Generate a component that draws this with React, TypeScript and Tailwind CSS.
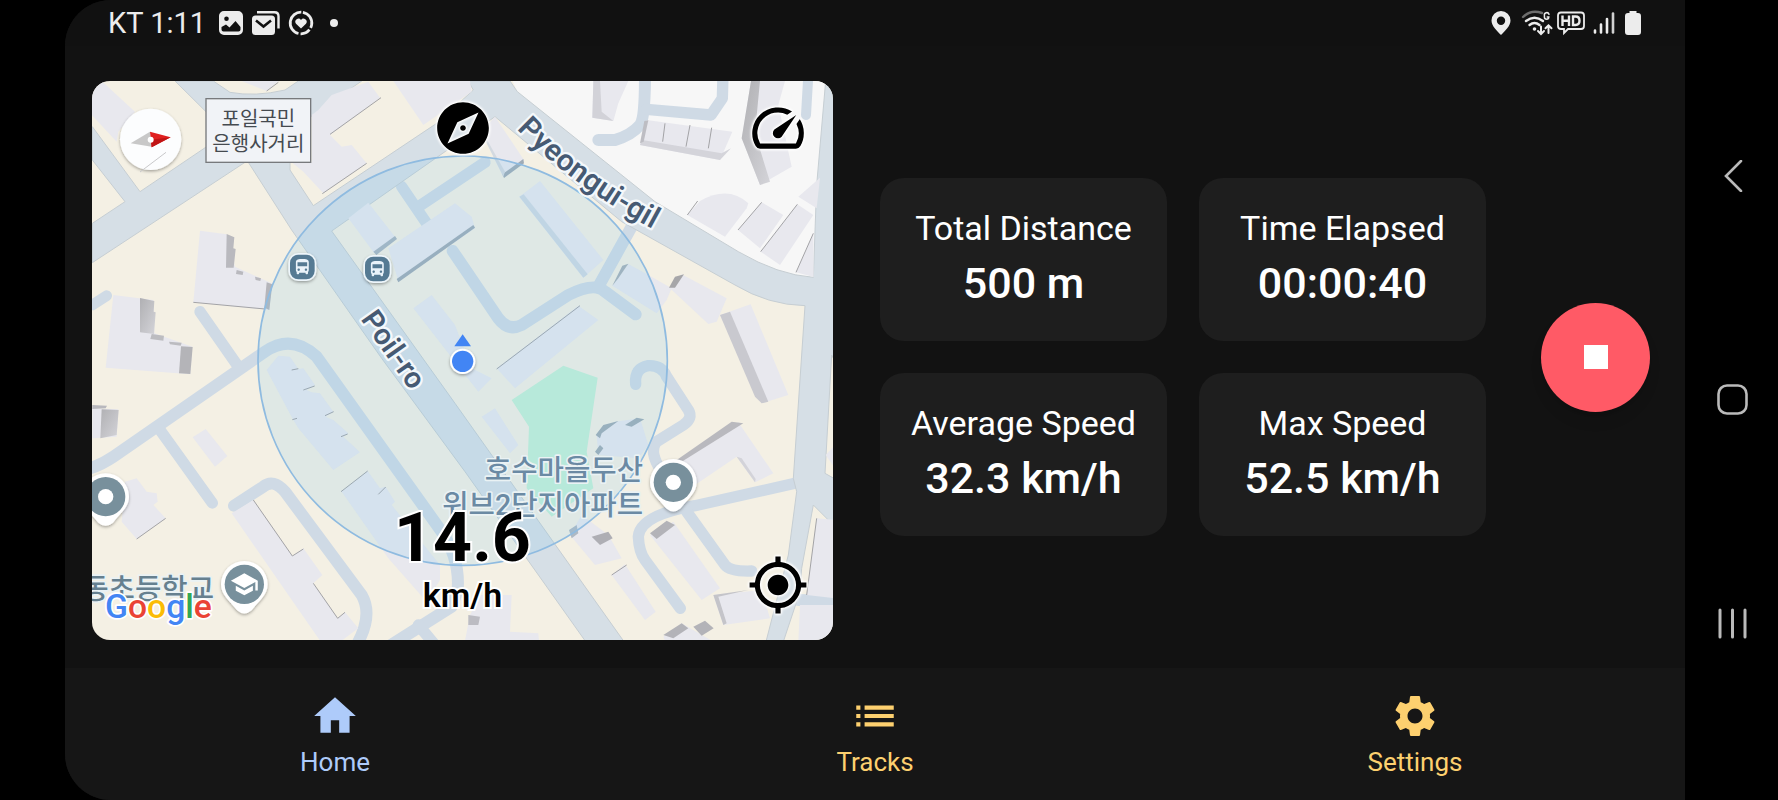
import type { ReactNode } from "react";
import {
  MdDirectionsBus,
  MdExplore,
  MdHome,
  MdList,
  MdMyLocation,
  MdSchool,
  MdSettings,
  MdSpeed,
} from "react-icons/md";

const ROAD = "#d6dfe6";
const LANE = "#cfdae5";
const EDGE = "#c6ced3";
const BUILDING = "#e8e8ee";
const PARK = "1435,872 1538,908 1505,1130 1525,1240 1400,1325 1325,1240 1332,1055 1280,975";

const lanes: [string, number][] = [
  ["M22 690 L65 662", 32],
  ["M345 710 L460 875", 34],
  ["M0 1185 Q45 1172 85 1145 L540 830 Q620 775 695 845 L1070 1370 Q1125 1450 1118 1545 L1100 1595 L910 1715", 36],
  ["M225 1065 L382 1284", 34],
  ["M447 1292 L535 1235 Q565 1210 600 1250 L830 1560 Q865 1620 815 1710", 36],
  ["M1000 1650 L1050 1710", 34],
  ["M950 335 L1025 445", 34],
  ["M1000 395 L1200 262", 34],
  ["M1103 528 L1240 730 Q1270 770 1310 750 L1450 660 Q1530 620 1560 650 L1652 718", 36],
  ["M1540 635 L1640 455", 36],
  ["M1540 195 H1590 Q1640 180 1665 150 Q1680 130 1680 0", 36],
  ["M1685 103 L1878 120 L1912 70 L1914 0", 34],
  ["M2163 120 L2170 0", 30],
  ["M1652 928 Q1648 880 1690 872 Q1730 870 1745 905 L1810 1005 Q1825 1030 1795 1050 L1715 1100 Q1690 1130 1730 1190", 34],
  ["M2130 1225 L1830 1292 Q1665 1320 1660 1385 Q1662 1430 1680 1455 L1786 1600", 34],
  ["M1805 1310 L1920 1470 Q1935 1490 2000 1488", 34],
  ["M2140 1575 L2250 1578", 36],
];

const mainRoads =
  "M22 155 L165 350 L365 215 L365 112 L270 18 H385 L435 52 Q510 66 600 45 L640 18 H830 L670 130 L615 262 L615 285 L685 392 L1055 145 L1110 95 L1165 45 L1150 18 H1275 L1297 50 L1710 380 L1960 530 Q2080 600 2185 607 L2195 330 L2222 18 H2250 V860 L2240 840 L2220 1195 L2250 1212 V1355 L2185 1290 L2150 1480 L2145 1550 L2095 1700 H2043 L2110 1440 L2135 1250 L2125 1210 L2150 840 L2160 692 Q2050 690 1950 630 L1610 440 L1230 125 L740 468 L1110 985 L1615 1697 H1500 L1140 1190 L890 850 L620 465 L490 262 L480 262 L22 563 V445 L120 380 L22 255 Z";

const buildings = [
  "22,18 50,18 150,110 100,170 95,200 20,120",
  "680,120 700,105 740,60 850,20 885,68 735,180 770,215 800,210 845,265 715,355 655,290 620,262 680,262",
  "470,18 580,18 545,48",
  "925,18 1155,18 1160,50 1015,150",
  "345,467 425,478 450,575 560,625 553,705 325,682",
  "85,660 205,675 208,775 322,815 316,898 62,878",
  "22,1000 100,1003 95,1085 22,1090",
  "323,1087 362,1062 427,1143 390,1175",
  "120,1220 155,1210 185,1250 215,1255 218,1280 205,1290 242,1330 155,1392 110,1340",
  "440,1315 505,1275 622,1443 655,1420 712,1500 685,1525 758,1630 780,1612 820,1660 770,1697 705,1697",
  "545,885 580,842 615,845 640,882 655,880 690,930 665,945 680,952 705,955 745,1010 722,1025 745,1035 790,1075 775,1085 825,1132 745,1185 640,1060 622,1030",
  "770,1250 848,1188 885,1240 902,1235 930,1280 920,1290 1065,1470 1065,1515 1025,1580 910,1450",
  "790,430 850,383 930,485 868,535",
  "910,520 1110,385 1160,425 1170,460 940,618",
  "985,700 1040,660 1110,750 1160,880 1220,910 1180,950",
  "1190,1025 1230,1000 1300,1110 1275,1135",
  "1188,170 1230,125 1317,255 1255,305",
  "1303,365 1365,318 1555,555 1495,608",
  "1235,880 1480,692 1540,735 1290,940",
  "1582,632 1630,567 1690,600 1760,640 1745,675 1715,715",
  "1755,640 1790,598 1925,670 1895,740 1870,747",
  "1905,720 1997,688 2110,960 2030,985",
  "1525,18 1630,18 1600,85 1585,138 1522,128",
  "1665,210 1685,135 1942,170 1905,255",
  "1970,190 1998,18 2100,18 2080,90 2120,275 2025,330",
  "1959,465 2030,382 2095,420 2025,520",
  "2027,530 2137,388 2185,420 2085,570",
  "2140,365 2205,308 2195,400",
  "2133,592 2185,475 2186,606",
  "1535,1080 1590,1040 1665,1030 1690,1110 1660,1150 1540,1140",
  "1770,1160 1960,1042 2065,1195 2010,1222 1955,1145 1830,1230",
  "1695,1380 1765,1340 1905,1540 1850,1575",
  "1455,1380 1490,1320 1570,1380 1610,1450 1530,1470",
  "1580,1500 1620,1468 1712,1610 1680,1635",
  "1885,1560 2030,1545 2055,1630 1915,1650",
  "1735,1685 1790,1645 1880,1697 1740,1697",
  "2195,1330 2250,1335 2250,1570 2165,1560",
  "2145,1590 2250,1590 2250,1697 2140,1697",
  "1140,1697 1155,1620 1185,1560 1280,1560 1275,1670 1360,1675 1362,1697",
  "2222,1140 2250,1110 2250,1180",
];

const shades: [string, string][] = [
  ["425,477 448,487 445,520 452,522 446,578 423,578", "#b9b9be"],
  ["455,585 475,590 473,600 453,597", "#b9b9be"],
  ["510,605 528,610 526,618 512,615", "#b9b9be"],
  ["545,622 562,628 553,705 538,698", "#b5b5ba"],
  ["165,669 208,678 206,710 212,712 207,777 165,772", "url(#wall)"],
  ["200,777 237,782 235,797 196,792", "#bcbcc0"],
  ["252,800 290,803 287,812 255,808", "#bcbcc0"],
  ["288,814 323,816 316,897 282,895", "#b4b4b8"],
  ["50,1003 101,1005 95,1080 46,1090", "url(#wall)"],
  ["22,990 66,992 62,1000 22,1002", "#b8b8bd"],
  ["865,530 930,483 936,492 874,540", "#a9b5c0"],
  ["935,612 1165,450 1170,458 940,622", "#9fabb6"],
  ["1252,298 1315,252 1317,265 1257,309", "#9fabb6"],
  ["1303,365 1316,358 1508,598 1495,608", "#cfd9e3"],
  ["1582,632 1612,572 1630,566 1600,610", "#a7b0b8"],
  ["1752,638 1770,605 1797,598 1770,638", "#a6a6a9"],
  ["1905,720 1935,710 2050,980 2030,985 2010,965", "#c9c9cf"],
  ["1532,1080 1555,1050 1600,1038 1550,1075 1545,1090", "#9facb5"],
  ["1530,1130 1545,1110 1555,1120 1540,1140", "#9facb5"],
  ["1620,1050 1655,1028 1678,1033 1640,1055", "#9facb5"],
  ["1775,1155 1940,1040 1975,1045 1790,1160", "#b9b9be"],
  ["1955,1145 1970,1150 2012,1212 2010,1222", "#d3d3d9"],
  ["1695,1375 1745,1337 1770,1350 1715,1392", "#b3b3b8"],
  ["1520,1385 1570,1370 1583,1390 1545,1410", "#aeaeb4"],
  ["1452,1365 1475,1350 1480,1375 1460,1390", "#aeb9c4"],
  ["1885,1560 1990,1545 1900,1565 1925,1645 1915,1650", "#c4c4c9"],
  ["1735,1680 1790,1645 1810,1660 1765,1690", "#b3b3b8"],
  ["1825,1655 1860,1637 1886,1660 1850,1682", "#b3b3b8"],
  ["1150,1620 1185,1625 1180,1650 1150,1650", "#bcbcc2"],
  ["1970,190 1998,18 2025,18 2010,175 2055,320 2025,330", "url(#wall)"],
  ["1525,18 1545,18 1550,110 1585,138 1522,128", "#d2d2d8"],
  ["1665,210 1672,195 1910,235 1938,220 1905,255", "#d4d4da"],
  ["1665,205 1678,138 1690,136 1676,200", "#bdbdc3"],
  ["1188,170 1195,175 1260,290 1255,305", "#d3d9e0"],
];

const hairlines = [
  "M735 178 L888 68 M712 356 L845 265 M545 48 L580 22",
  "M505 1275 L622 1443 L655 1422 M685 1525 L758 1630 L780 1612",
  "M768 1250 L848 1188 M155 1392 L242 1330",
  "M1235 882 L1485 692",
  "M1740 145 L1733 200 M1815 150 L1803 215 M1880 158 L1870 220",
  "M1807 420 L1838 378 M1959 465 L2030 382 M2027 530 L2137 388 M2133 592 L2185 475",
  "M1580 1500 L1625 1470 M2195 1330 L2165 1560 M325 682 L540 702",
  "M620 885 l20 -4 M655 945 l34 -12 M720 1022 l26 -12 M768 1085 l20 -8 M880 1258 l22 -22 M622 1034 l14 -4",
];

function Pin({ x, y, children }: { x: number; y: number; children?: ReactNode }) {
  return (
    <g transform={`translate(${x} ${y})`}>
      <path
        d="M-70 0 A70 70 0 1 1 70 0 C70 32 45 48 22 78 Q0 97 -22 78 C-45 48 -70 32 -70 0Z"
        fill="#fff"
        filter="url(#soft)"
      />
      <circle r="59" fill="#78909c" />
      {children ?? <circle r="23" fill="#fff" />}
    </g>
  );
}

function BusStop({ x, y }: { x: number; y: number }) {
  return (
    <g transform={`translate(${x} ${y})`}>
      <rect x="-42" y="-42" width="84" height="84" rx="30" fill="#eef6fb" filter="url(#soft)" />
      <rect x="-37" y="-37" width="74" height="74" rx="25" fill="#557a93" />
      <MdDirectionsBus x="-29" y="-29" width="58" height="58" size={58} color="#eaf3fa" />
    </g>
  );
}

function MapCanvas() {
  return (
    <svg
      viewBox="21 18 2223 1677"
      preserveAspectRatio="xMidYMid slice"
      className="block h-full w-full font-['Roboto','Noto_Sans_CJK_KR',sans-serif]"
      role="img"
      aria-label="Map"
    >
      <defs>
        <linearGradient id="wall" x1="0" x2="1" y1="0" y2="1">
          <stop offset="0" stopColor="#b0b0b3" />
          <stop offset="1" stopColor="#d4d4d9" />
        </linearGradient>
        <filter id="soft" x="-30%" y="-30%" width="160%" height="160%">
          <feDropShadow dx="0" dy="4" stdDeviation="5" floodOpacity="0.35" />
        </filter>
        <path id="pyeongui" d="M1295 162 Q1470 345 1760 492" />
      </defs>
      <rect x="0" y="0" width="2260" height="1720" fill="#f4f0e4" />
      <path d="M1275 0 L1297 50 L1710 380 L1960 530 Q2080 600 2185 607 L2200 330 L2222 0Z" fill="#f7f7f7" />
      {lanes.map(([d, w]) => (
        <path key={d} d={d} fill="none" stroke={LANE} strokeWidth={w} strokeLinecap="round" strokeLinejoin="round" />
      ))}
      <path d={mainRoads} fill={ROAD} stroke={EDGE} strokeWidth="3" />
      {buildings.map((p) => (
        <polygon key={p} points={p} fill={BUILDING} />
      ))}
      <path d="M1807 420 L1845 378 Q1930 330 1990 385 L1985 400 L1920 485Z" fill={BUILDING} />
      {shades.map(([p, fill]) => (
        <polygon key={p} points={p} fill={fill} />
      ))}
      {hairlines.map((d) => (
        <path key={d} d={d} fill="none" stroke="#a3a3a6" strokeWidth="3" />
      ))}

      <circle cx="1133" cy="857" r="614" fill="#78c2f0" fillOpacity="0.17" stroke="#8fbbe0" strokeWidth="5" />
      <polygon points={PARK} fill="#b7e9da" />

      <g fill="#465a73" stroke="#f4f8fb" strokeWidth="14" strokeLinejoin="round" paintOrder="stroke" fontWeight="600">
        <text fontSize="90">
          <textPath href="#pyeongui">Pyeongui-gil</textPath>
        </text>
        <text fontSize="88" transform="translate(826 732) rotate(55)">
          Poil-ro
        </text>
      </g>
      <g
        fill="#6b8aa4"
        stroke="#eaf2f4"
        strokeWidth="10"
        strokeLinejoin="round"
        paintOrder="stroke"
        textAnchor="end"
        fontSize="86"
        fontWeight="500"
      >
        <text x="1674" y="1216">호수마을두산</text>
        <text x="1674" y="1320">위브2단지아파트</text>
        <text x="387" y="1572" fill="#66808f">동초등학교</text>
      </g>

      <rect x="363" y="71" width="314" height="191" fill="#f1f3f7" stroke="#77797c" strokeWidth="4" />
      <g fill="#454a50" textAnchor="middle" fontSize="60">
        <text x="520" y="154">포일국민</text>
        <text x="520" y="229">은행사거리</text>
      </g>

      <BusStop x={652} y={576} />
      <BusStop x={877} y={582} />
      <Pin x={62} y={1265} />
      <Pin x={1765} y={1222} />
      <Pin x={478} y={1528}>
        <MdSchool x="-44" y="-44" width="88" height="88" size={88} color="#fff" />
      </Pin>

      <path d="M1133 778 L1158 814 H1108Z" fill="#4285f4" />
      <circle cx="1133" cy="859" r="38" fill="#fff" filter="url(#soft)" />
      <circle cx="1133" cy="859" r="32" fill="#4285f4" />

      <circle cx="197" cy="193" r="92" fill="#fcfdfe" filter="url(#soft)" />
      <path d="M165 291 L243 232" stroke="#c9c9cb" strokeWidth="3" />
      <path d="M137 205 L195 170 L200 215Z" fill="#c8c8c8" />
      <path d="M195 170 L257 187 L200 217Z" fill="#e02020" />
      <path d="M200 217 L257 187 L197 194Z" fill="#c01414" />
      <circle cx="197" cy="194" r="9" fill="#fff" />

      <text
        x="60"
        y="1628"
        fontSize="101"
        fontWeight="500"
        stroke="#fff"
        strokeWidth="10"
        strokeLinejoin="round"
        paintOrder="stroke"
      >
        <tspan fill="#4285f4">G</tspan>
        <tspan fill="#ea4335">o</tspan>
        <tspan fill="#fbbc05">o</tspan>
        <tspan fill="#4285f4">g</tspan>
        <tspan fill="#34a853">l</tspan>
        <tspan fill="#ea4335">e</tspan>
      </text>
    </svg>
  );
}

const mapButton =
  "absolute text-black [filter:drop-shadow(0_0_1px_#fff)_drop-shadow(0_0_1px_#fff)_drop-shadow(0_0_1px_#fff)]";

function MapPanel() {
  return (
    <section className="relative h-full overflow-hidden rounded-[18px]">
      <div className="absolute inset-0">
        <MapCanvas />
      </div>
      <button type="button" aria-label="Compass" className={`${mapButton} top-4 left-1/2 -translate-x-1/2`}>
        <MdExplore size={62} />
      </button>
      <button type="button" aria-label="Speedometer" className={`${mapButton} top-4 right-6`}>
        <MdSpeed size={62} />
      </button>
      <button type="button" aria-label="My location" className={`${mapButton} right-6 bottom-6`}>
        <MdMyLocation size={62} />
      </button>
      <div className="absolute inset-x-0 bottom-6 flex flex-col items-center font-bold text-black [-webkit-text-stroke:4px_white] [paint-order:stroke_fill]">
        <span className="text-[68px] leading-[72px]">14.6</span>
        <span className="text-[34px] leading-[42px] font-semibold">km/h</span>
      </div>
    </section>
  );
}

function StatusBar() {
  return (
    <header className="flex h-[46px] items-center justify-between bg-[#111] pr-11 pl-[43px] text-[#ececec]">
      <div className="flex items-center">
        <span className="text-[29px] leading-8">KT 1:11</span>
        <svg className="ml-3 h-[26px] w-[26px]" viewBox="0 0 26 26" fill="#ececec" aria-hidden="true">
          <path
            fillRule="evenodd"
            d="M6 1h14a5 5 0 0 1 5 5v14a5 5 0 0 1-5 5H6a5 5 0 0 1-5-5V6a5 5 0 0 1 5-5Zm2.500 5.500a2.300 2.300 0 1 0 0 4.600 2.300 2.300 0 0 0 0-4.600ZM3.500 17v2.500a2 2 0 0 0 2 2h15a2 2 0 0 0 2-2V17l-5-6-6 6.500L8 14.500Z"
          />
        </svg>
        <svg className="ml-2 h-[26px] w-[28px]" viewBox="0 0 28 26" fill="none" aria-hidden="true">
          <path d="M5 2.200h17.500q4 0 4 4V18.500" stroke="#ececec" strokeWidth="2.400" />
          <rect x="0" y="5.500" width="23" height="19.500" rx="3.500" fill="#ececec" />
          <path d="M4 10.500l7.500 6 7.500-6" stroke="#111" strokeWidth="2.600" />
        </svg>
        <svg className="ml-2 h-[26px] w-[26px]" viewBox="0 0 26 26" fill="none" aria-hidden="true">
          <circle
            cx="13"
            cy="13"
            r="10.800"
            stroke="#ececec"
            strokeWidth="2.800"
            strokeDasharray="20 2.200 10 2.200 31.400 2.100"
            transform="rotate(-80 13 13)"
          />
          <path d="M13 18.500l-5-4.800a3.100 3.100 0 0 1 5-3.700 3.100 3.100 0 0 1 5 3.700Z" fill="#ececec" />
        </svg>
        <span className="ml-4 h-2 w-2 rounded-full bg-[#ececec]" />
      </div>
      <div className="flex items-center">
        <svg className="h-[26px] w-5" viewBox="0 0 20 26" fill="#ececec" aria-hidden="true">
          <path
            fillRule="evenodd"
            d="M10 1a9.500 9.500 0 0 1 9.500 9.500C19.500 16 14 21 10 25 6 21 .5 16 .5 10.500A9.500 9.500 0 0 1 10 1Zm0 5.500a4.200 4.200 0 1 0 0 8.400 4.200 4.200 0 0 0 0-8.400Z"
          />
        </svg>
        <svg className="ml-2.5 h-[26px] w-8" viewBox="0 0 32 26" fill="none" strokeWidth="2.400" strokeLinecap="round" aria-hidden="true">
          <path d="M2 7Q10 -1 21 3" stroke="#6d6d6d" />
          <path d="M5 11q8.500-6.500 17 0M8.500 15q5-4 10 0" stroke="#ececec" />
          <circle cx="13.500" cy="19" r="1.800" fill="#ececec" />
          <path d="M28 4.200a2.400 2.400 0 0 0-4.600 1.300v1.500a2.200 2.200 0 0 0 4.400 0h-1.600" stroke="#ececec" strokeWidth="1.500" />
          <path d="M20 16.500v7m-3-2.500l3 3 3-3M27.500 23v-7.500m-3 2.800l3-3 3 3" stroke="#ececec" strokeWidth="2" />
        </svg>
        <svg className="ml-1 h-[26px] w-7" viewBox="0 0 28 26" fill="none" stroke="#ececec" aria-hidden="true">
          <path d="M4 2.500h20q3 0 3 3V16q0 3-3 3H11l-4 4v-4H4q-3 0-3-3V5.500q0-3 3-3Z" strokeWidth="1.800" />
          <path d="M5.500 5.500v10.500M12 5.500v10.500M5.500 10.800H12M16 6.500v8.500h2.500q4 0 4-4.250t-4-4.250Z" strokeWidth="2.400" />
        </svg>
        <svg className="ml-2 h-[26px] w-[22px]" viewBox="0 0 22 26" stroke="#ececec" strokeWidth="2.600" strokeLinecap="round" aria-hidden="true">
          <path d="M2 20.500v2M8 14.500v8M14 9v13.500" />
          <path d="M20 3.500v19" stroke="#d0d0d0" />
        </svg>
        <svg className="ml-2.5 h-[26px] w-4" viewBox="0 0 16 26" fill="#ececec" aria-hidden="true">
          <path d="M4.500 1h7v2H13q3 0 3 3v16q0 3-3 3H3q-3 0-3-3V6q0-3 3-3h1.500Z" />
        </svg>
      </div>
    </header>
  );
}

const stats = [
  { label: "Total Distance", value: "500 m" },
  { label: "Time Elapsed", value: "00:00:40" },
  { label: "Average Speed", value: "32.3 km/h" },
  { label: "Max Speed", value: "52.5 km/h" },
];

const tabs = [
  { label: "Home", Icon: MdHome, color: "text-[#aecbfa]" },
  { label: "Tracks", Icon: MdList, color: "text-[#fdd06f]" },
  { label: "Settings", Icon: MdSettings, color: "text-[#fdd06f]" },
];

export default function App() {
  return (
    <div className="flex min-h-screen bg-black pl-[65px] font-['Roboto','Noto_Sans_CJK_KR',sans-serif] text-white">
      <div className="flex min-w-0 flex-1 flex-col overflow-hidden rounded-l-[46px] bg-[#121212]">
        <StatusBar />
        <main className="flex flex-1 items-center pr-[35px] pl-[27px]">
          <div className="flex-[741_1_0%] self-stretch pt-[35px] pb-7">
            <MapPanel />
          </div>
          <dl className="ml-[47px] grid flex-[606_1_0%] grid-cols-2 gap-8">
            {stats.map((s) => (
              <div
                key={s.label}
                className="flex flex-col items-center gap-[7px] rounded-3xl bg-[#1e1e1e] pt-7 pb-8 whitespace-nowrap"
              >
                <dt className="text-[34px] leading-[44px]">{s.label}</dt>
                <dd className="text-[43px] leading-[52px] font-medium">{s.value}</dd>
              </div>
            ))}
          </dl>
          <button
            type="button"
            aria-label="Stop"
            className="ml-[55px] flex h-[109px] w-[109px] shrink-0 items-center justify-center rounded-full bg-[#ff5a66] shadow-lg"
          >
            <span className="h-6 w-6 bg-white" />
          </button>
        </main>
        <nav className="grid h-[132px] grid-cols-3 bg-[#161616]">
          {tabs.map(({ label, Icon, color }) => (
            <a
              key={label}
              href={`#${label.toLowerCase()}`}
              className={`flex flex-col items-center gap-[5px] pt-[23px] ${color}`}
            >
              <Icon size={50} aria-hidden="true" />
              <span className="text-[26px] leading-8">{label}</span>
            </a>
          ))}
        </nav>
      </div>
      <nav aria-label="System" className="flex w-[93px] flex-col items-center justify-center">
        <button type="button" aria-label="Back" className="flex h-56 items-center">
          <svg className="h-8 w-8" viewBox="0 0 32 32" fill="none" stroke="#bababa" strokeWidth="2.600" strokeLinecap="round" aria-hidden="true">
            <path d="M25 1L10 16L25 31" />
          </svg>
        </button>
        <button type="button" aria-label="Home screen" className="flex h-56 items-center">
          <svg className="h-8 w-8" viewBox="0 0 32 32" fill="none" stroke="#bababa" strokeWidth="2.600" aria-hidden="true">
            <rect x="2.500" y="1.500" width="28" height="28" rx="8.500" />
          </svg>
        </button>
        <button type="button" aria-label="Recent apps" className="flex h-56 items-center">
          <svg className="h-8 w-8" viewBox="0 0 32 32" stroke="#bababa" strokeWidth="3" strokeLinecap="round" aria-hidden="true">
            <path d="M4 2v27M16.500 2v27M29 2v27" />
          </svg>
        </button>
      </nav>
    </div>
  );
}
